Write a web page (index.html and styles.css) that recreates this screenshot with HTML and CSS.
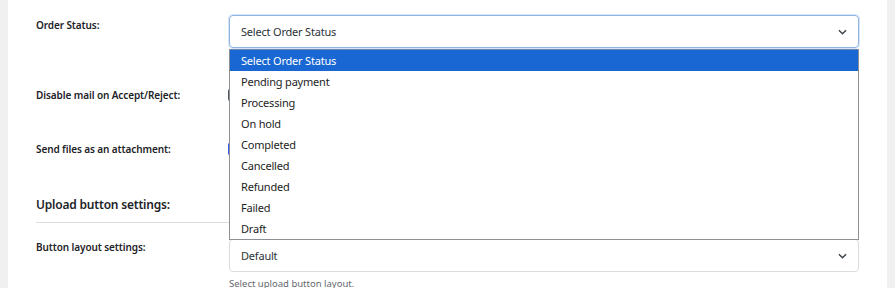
FILE: index.html
```html
<!DOCTYPE html>
<html lang="en">
<head>
  <meta charset="UTF-8" />
  <title>Upload settings</title>
  <link rel="stylesheet" href="styles.css">
</head>
<body>
  <div class="wrap">
    <div class="panel">

      <div class="row row-status">
        <div class="label">Order Status:</div>
        <div class="field">
          <div class="select is-open">
            <span>Select Order Status</span>
            <svg class="chevron" viewBox="0 0 10 6"><path d="M1 1l4 4 4-4" fill="none" stroke="currentColor" stroke-width="1.6"/></svg>
          </div>
          <ul class="dropdown">
            <li class="active">Select Order Status</li>
            <li>Pending payment</li>
            <li>Processing</li>
            <li>On hold</li>
            <li>Completed</li>
            <li>Cancelled</li>
            <li>Refunded</li>
            <li>Failed</li>
            <li>Draft</li>
          </ul>
        </div>
      </div>

      <div class="row row-check">
        <div class="label">Disable mail on Accept/Reject:</div>
        <div class="field"><span class="checkbox"></span></div>
      </div>

      <div class="row row-check">
        <div class="label">Send files as an attachment:</div>
        <div class="field"><span class="checkbox checked"></span></div>
      </div>

      <h2 class="section-title">Upload button settings:</h2>

      <div class="row row-layout">
        <div class="label">Button layout settings:</div>
        <div class="field">
          <div class="select">
            <span>Default</span>
            <svg class="chevron" viewBox="0 0 10 6"><path d="M1 1l4 4 4-4" fill="none" stroke="currentColor" stroke-width="1.6"/></svg>
          </div>
          <p class="description">Select upload button layout.</p>
        </div>
      </div>

    </div>
  </div>
</body>
</html>
```

FILE: styles.css
```css
:root {
  --bg: #f0f0f1;
  --text: #1d2327;
  --muted: #646970;
  --border: #dcdcde;
  --focus: #8fb5e3;
  --highlight: #1967d2;
}

* {
  box-sizing: border-box;
  margin: 0;
  padding: 0;
}

body {
  font-family: 'Noto Sans', 'Open Sans', sans-serif;
  background-color: var(--bg);
  color: var(--text);
  height: 288px;
  overflow: hidden;
}

.wrap {
  padding: 0 8px;
}

.panel {
  background: #fff;
  padding: 15px 28px 0;
  height: 288px;
}

.row {
  display: grid;
  grid-template-columns: 193px 1fr;
}

.label {
  font-size: 10px;
  font-weight: 600;
  letter-spacing: -0.1px;
  line-height: 14px;
  padding-top: 3px;
}

.field {
  position: relative;
}

.select {
  height: 33px;
  border: 1px solid var(--border);
  border-radius: 4px;
  padding: 0 11px;
  display: flex;
  align-items: center;
  justify-content: space-between;
  font-size: 11px;
  letter-spacing: -0.2px;
  color: #2c3338;
}

.select.is-open {
  border-color: var(--focus);
  box-shadow: 0 0 0 1px #d6e4f5;
}

.chevron {
  width: 9px;
  height: 6px;
  color: #3c434a;
}

/* native popup drawn over the form */
.dropdown {
  position: absolute;
  top: 34px;
  left: 0;
  right: 0;
  list-style: none;
  background: #fff;
  border: 1px solid #8c8f94;
  border-top-color: #6d8bb3;
  font-size: 11px;
  letter-spacing: -0.2px;
  color: #1d1d1d;
  z-index: 2;
}

.dropdown li {
  height: 21px;
  line-height: 21px;
  padding-left: 11px;
}

.dropdown li.active {
  background: var(--highlight);
  color: #fff;
}

.row-check {
  padding-top: 40px;
}

.row-check .label {
  padding-top: 0;
}

.checkbox {
  display: block;
  width: 14px;
  height: 14px;
  margin-left: -1px;
  border: 1px solid #50575e;
  border-radius: 3px;
  background: #fff;
}

.checkbox.checked {
  background: #3858e9;
  border-color: #3858e9;
}

.section-title {
  font-size: 12px;
  font-weight: 600;
  letter-spacing: -0.2px;
  line-height: 18px;
  margin-top: 40px;
  padding-bottom: 8px;
  border-bottom: 1px solid var(--border);
}

.row-layout {
  padding-top: 16px;
}

.row-layout .label {
  padding-top: 1px;
}

.description {
  font-size: 9.5px;
  color: var(--muted);
  margin-top: 5px;
}
```
